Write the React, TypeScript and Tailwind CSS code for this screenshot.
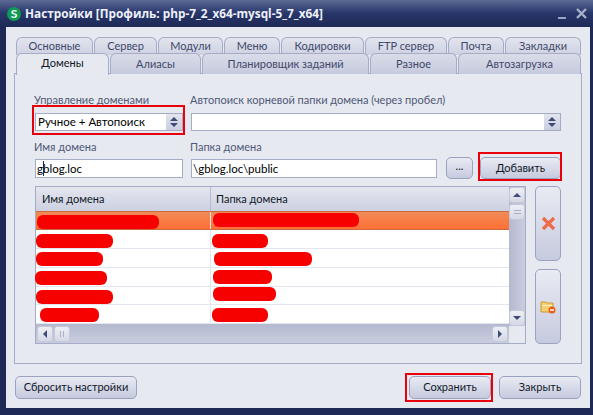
const font = { fontFamily: 'Lato, "Noto Sans", sans-serif' };

const topTabs = [
  ['Основные', 'w-[77px]'],
  ['Сервер', 'w-[63px]'],
  ['Модули', 'w-[65px]'],
  ['Меню', 'w-[56px]'],
  ['Кодировки', 'w-[83px]'],
  ['FTP сервер', 'w-[82px]'],
  ['Почта', 'w-[56px]'],
  ['Закладки', 'w-[76px]'],
];

const lowerTabs = [
  ['Алиасы', 'w-[91px]'],
  ['Планировщик заданий', 'w-[167px]'],
  ['Разное', 'w-[87px]'],
  ['Автозагрузка', 'w-[123px]'],
];

// red scribbles over the table rows
const rows = [
  { a: 'ml-[1px] mt-[3px] w-[122px]', b: 'ml-[2px] mt-[1px] w-[146px]' },
  { a: 'ml-0 mt-[4px] w-[77px]', b: 'ml-[1px] mt-[4px] w-[56px]' },
  { a: 'ml-0 mt-[3px] w-[67px]', b: 'ml-[3px] mt-[3px] w-[98px]' },
  { a: '-ml-[1px] mt-[3px] w-[72px]', b: 'ml-[2px] mt-[2px] w-[59px]' },
  { a: 'ml-0 mt-[3px] w-[77px]', b: 'ml-[2px] mt-0 w-[63px]' },
  { a: 'ml-[4px] mt-[3px] w-[59px]', b: 'ml-[1px] mt-[3px] w-[56px]' },
];

const btn =
  'flex items-center justify-center whitespace-nowrap rounded-[5px] border border-[#9aa2c0] bg-gradient-to-b from-[#e9ebf3] to-[#c6cade] text-[11px] text-[#111827]';

function Spinner() {
  return (
    <div className="flex h-full w-[16px] flex-col items-center justify-center gap-[2px] bg-gradient-to-b from-[#e3e6ee] to-[#c9cddf]">
      <div className="h-0 w-0 border-x-[4px] border-b-[4px] border-x-transparent border-b-[#3e4a78]" />
      <div className="h-0 w-0 border-x-[4px] border-t-[4px] border-x-transparent border-t-[#3e4a78]" />
    </div>
  );
}

function ScrollBtn({ children }: { children?: React.ReactNode }) {
  return (
    <div className="flex h-[16px] w-[16px] items-center justify-center rounded-[3px] border border-[#c3c8da] bg-gradient-to-b from-[#eef0f5] to-[#d5d8e5]">
      {children}
    </div>
  );
}

export default function App() {
  return (
    <div style={font} className="flex h-[415px] w-[593px] flex-col overflow-hidden bg-[#1e2a55]">
      {/* title bar */}
      <div className="flex h-[27px] shrink-0 items-center bg-gradient-to-b from-[#5c6a94] via-[#27356a] to-[#1e2a55] pl-[7px] pr-[6px]">
        <div className="flex h-[14px] w-[14px] items-center justify-center rounded-full bg-[#0f9a55] text-[12px] font-bold text-white">
          S
        </div>
        <div
          style={{ fontFamily: '"Open Sans", sans-serif' }}
          className="ml-[4px] text-[11.8px] font-bold whitespace-nowrap text-[#eef1f8]"
        >
          Настройки [Профиль: php-7_2_x64-mysql-5_7_x64]
        </div>
        <div className="ml-auto flex items-center gap-[10px]">
          <div className="mt-[8px] h-[2px] w-[8px] bg-[#9aa3bf]" />
          <svg width="11" height="11" viewBox="0 0 11 11">
            <path d="M1 1l9 9M10 1l-9 9" stroke="#a8b0c8" strokeWidth="2.4" />
          </svg>
        </div>
      </div>

      {/* client area */}
      <div className="ml-[6px] h-[381px] w-[584px] bg-[#e6e9ef] pl-[8px] pt-[10px]">
        <div className="ml-[2px] flex h-[18px] gap-[1px]">
          {topTabs.map(([label, w]) => (
            <div
              key={label}
              className={`${w} flex h-[18px] shrink-0 items-center justify-center rounded-t-[6px] border border-b-0 border-[#a5acc6] bg-gradient-to-b from-[#e2e5ee] to-[#cdd1e2] text-[11px] text-[#3f4869]`}
            >
              {label}
            </div>
          ))}
        </div>
        <div className="relative z-10 -mt-[2px] ml-[2px] flex h-[21px] gap-[1px]">
          <div className="flex h-[22px] w-[93px] shrink-0 items-center justify-center rounded-t-[6px] border border-b-0 border-[#a5acc6] bg-[#e6e9ef] pb-[2px] text-[11px] text-[#111827]">
            Домены
          </div>
          {lowerTabs.map(([label, w]) => (
            <div
              key={label}
              className={`${w} flex h-[21px] shrink-0 items-center justify-center rounded-t-[6px] border border-b-0 border-[#a5acc6] bg-gradient-to-b from-[#d9dce8] to-[#c6cade] text-[11px] text-[#3f4869]`}
            >
              {label}
            </div>
          ))}
        </div>

        {/* panel */}
        <div className="-mt-[1px] h-[291px] w-[568px] border border-[#a5acc6] pl-[19px]">
          <div className="mt-[17px] flex h-[18px] items-center text-[11px] text-[#4f5878]">
            <div className="w-[156px]">Управление доменами</div>
            <div>Автопоиск корневой папки домена (через пробел)</div>
          </div>

          <div className="mt-[4px] flex h-[18px]">
            <div className="relative ml-[1px] flex h-[18px] w-[148px] items-center justify-between border border-[#a5acc6] bg-white pl-[2px] text-[11.5px] text-black">
              Ручное + Автопоиск
              <Spinner />
              <div className="absolute -bottom-[5px] -left-[4px] -right-[3px] -top-[9px] border-2 border-[#e8000d]" />
            </div>
            <div className="ml-[8px] flex h-[18px] w-[370px] items-center justify-end border border-[#a5acc6] bg-white">
              <Spinner />
            </div>
          </div>

          <div className="mt-[7px] flex h-[18px] items-center text-[11px] text-[#4f5878]">
            <div className="w-[156px]">Имя домена</div>
            <div>Папка домена</div>
          </div>

          <div className="mt-[1px] flex h-[22px]">
            <div className="relative ml-[1px] mt-[2px] flex h-[19px] w-[148px] items-center border border-[#a5acc6] bg-white pl-[1px] text-[11.5px] text-black">
              gblog.loc
              <div className="absolute left-[7px] top-[1px] h-[15px] w-[1px] bg-[#1f2937]" />
            </div>
            <div className="ml-[8px] mt-[2px] flex h-[19px] w-[246px] items-center border border-[#a5acc6] bg-white pl-[1px] text-[11.5px] text-black">
              \gblog.loc\public
            </div>
            <div className={`${btn} ml-[9px] h-[22px] w-[27px] pb-[4px]`}>...</div>
            <div className={`${btn} relative ml-[7px] h-[22px] w-[81px]`}>
              Добавить
              <div className="absolute -bottom-[3px] -left-[3px] -right-[2px] -top-[6px] border-2 border-[#e8000d]" />
            </div>
          </div>

          <div className="mt-[7px] flex">
            {/* table */}
            <div className="ml-[1px] flex h-[158px] w-[491px] border border-[#a5acc6] bg-[#e6e9ef]">
              <div className="flex w-[473px] flex-col">
                <div className="flex h-[24px] shrink-0 items-center bg-gradient-to-b from-[#e4e6ef] to-[#ccd0e1] text-[11px] text-[#111827]">
                  <div className="flex h-full w-[175px] items-center border-r border-[#b4bad0] pl-[6px]">Имя домена</div>
                  <div className="pl-[5px]">Папка домена</div>
                </div>
                {rows.map((r, i) => (
                  <div
                    key={i}
                    className={
                      i === 0
                        ? 'flex h-[19px] bg-gradient-to-b from-[#f08a55] to-[#ff6f35] border-y border-[#c96a3c]'
                        : 'flex h-[19px] border-b border-[#e3e6ee] bg-white'
                    }
                  >
                    <div className="h-full w-[175px] border-r border-[#e3e6ee]">
                      <div className={`${r.a} h-[14px] rounded-[6px] bg-[#f70000]`} />
                    </div>
                    <div>
                      <div className={`${r.b} h-[14px] rounded-[6px] bg-[#f70000]`} />
                    </div>
                  </div>
                ))}
                <div className="flex h-[19px] items-center justify-between bg-gradient-to-b from-[#b4b9cf] to-[#c9cddf] px-[1px]">
                  <div className="flex gap-[1px]">
                    <ScrollBtn>
                      <div className="h-0 w-0 border-y-[4px] border-r-[4px] border-y-transparent border-r-[#3e4a78]" />
                    </ScrollBtn>
                    <ScrollBtn>
                      <div className="h-[6px] w-[4px] border-x border-[#aab0c6]" />
                    </ScrollBtn>
                  </div>
                  <ScrollBtn>
                    <div className="h-0 w-0 border-y-[4px] border-l-[4px] border-y-transparent border-l-[#3e4a78]" />
                  </ScrollBtn>
                </div>
              </div>
              <div className="flex h-[139px] w-[16px] flex-col justify-between bg-gradient-to-r from-[#b4b9cf] to-[#c9cddf]">
                <div className="flex flex-col gap-[1px]">
                  <ScrollBtn>
                    <div className="h-0 w-0 border-x-[4px] border-b-[4px] border-x-transparent border-b-[#3e4a78]" />
                  </ScrollBtn>
                  <ScrollBtn>
                    <div className="h-[4px] w-[7px] border-y border-[#aab0c6]" />
                  </ScrollBtn>
                </div>
                <ScrollBtn>
                  <div className="h-0 w-0 border-x-[4px] border-t-[4px] border-x-transparent border-t-[#3e4a78]" />
                </ScrollBtn>
              </div>
            </div>

            {/* side buttons */}
            <div className="ml-[9px] flex flex-col gap-[8px]">
              <div className={`${btn} h-[75px] w-[26px]`}>
                <svg width="15" height="15" viewBox="0 0 15 15">
                  <path d="M2 2l11 11M13 2L2 13" stroke="#ee6a4a" strokeWidth="3.2" />
                </svg>
              </div>
              <div className={`${btn} h-[75px] w-[26px]`}>
                <svg width="16" height="14" viewBox="0 0 16 14">
                  <path d="M1 2h5l1 1h6v9H1z" fill="#f6cf6e" stroke="#c99a34" />
                  <path d="M2 5h10v1H2z" fill="#fdf0bd" />
                  <circle cx="12" cy="10" r="3.5" fill="#e8601c" />
                  <path d="M10 10h4" stroke="#fff" strokeWidth="1.4" />
                </svg>
              </div>
            </div>
          </div>
        </div>

        {/* footer */}
        <div className="mt-[12px] flex h-[23px]">
          <div className={`${btn} ml-[1px] h-[23px] w-[122px]`}>Сбросить настройки</div>
          <div className={`${btn} relative ml-[272px] h-[23px] w-[82px]`}>
            Сохранить
            <div className="absolute -bottom-[4px] -left-[5px] -right-[3px] -top-[4px] border-2 border-[#e8000d]" />
          </div>
          <div className={`${btn} ml-[8px] h-[23px] w-[82px]`}>Закрыть</div>
        </div>
      </div>
    </div>
  );
}
